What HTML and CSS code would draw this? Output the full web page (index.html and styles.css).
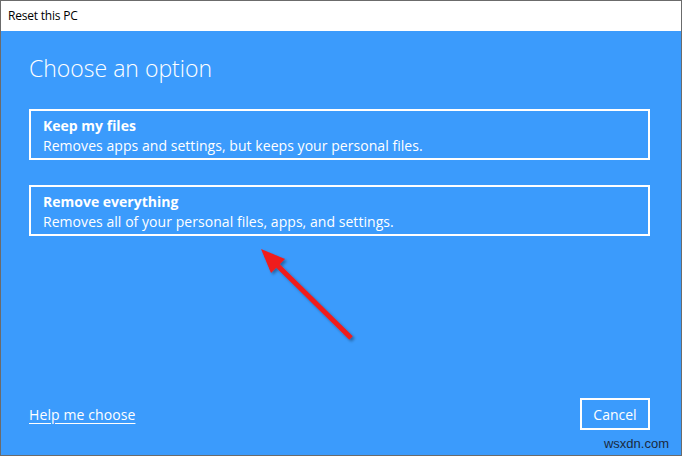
FILE: index.html
```html
<!DOCTYPE html>
<html lang="en">
<head>
    <meta charset="UTF-8">
    <title>Reset this PC</title>
    <link rel="stylesheet" href="styles.css">
</head>
<body>
    <div class="window">
        <div class="titlebar">Reset this PC</div>

        <div class="content">
            <h1 class="heading">Choose an option</h1>

            <div class="option">
                <div class="option-title">Keep my files</div>
                <div class="option-desc">Removes apps and settings, but keeps your personal files.</div>
            </div>

            <div class="option">
                <div class="option-title">Remove everything</div>
                <div class="option-desc">Removes all of your personal files, apps, and settings.</div>
            </div>

            <!-- Annotation arrow -->
            <svg class="arrow" width="120" height="110" viewBox="0 0 120 110">
                <defs>
                    <filter id="shadow" x="-20%" y="-20%" width="140%" height="140%">
                        <feDropShadow dx="2" dy="2" stdDeviation="1.5" flood-color="#000" flood-opacity="0.35"/>
                    </filter>
                </defs>
                <g filter="url(#shadow)">
                    <line x1="100" y1="96" x2="24" y2="21" stroke="#f01c1c" stroke-width="5"/>
                    <polygon points="10,7 34,17 20,31" fill="#f01c1c"/>
                </g>
            </svg>

            <div class="footer">
                <a class="help" href="#">Help me choose</a>
                <button class="cancel">Cancel</button>
            </div>
        </div>

        <div class="watermark">wsxdn.com</div>
    </div>
</body>
</html>
```

FILE: styles.css
```css
/* General Styles */
body {
    margin: 0;
    padding: 0;
    font-family: "Open Sans", "Noto Sans", sans-serif;
}

.window {
    position: relative;
    width: 682px;
    height: 456px;
    box-sizing: border-box;
    border: 1px solid #6b6b6b;
    display: flex;
    flex-direction: column;
    background: #3b9bfc;
    overflow: hidden;
}

.titlebar {
    height: 30px;
    background: #fff;
    color: #000;
    font-size: 12px;
    line-height: 30px;
    padding-left: 7px;
    letter-spacing: -0.2px;
}

.content {
    flex: 1;
    display: flex;
    flex-direction: column;
    padding: 0 31px 0 28px;
    color: #fff;
}

.heading {
    margin: 20px 0 0 0;
    font-size: 23px;
    font-weight: 300;
    line-height: 34px;
}

.option {
    margin-top: 24px;
    height: 51px;
    box-sizing: border-box;
    border: 2px solid #fff;
    padding: 5px 12px 0 12px;
}

.option + .option {
    margin-top: 25px;
}

.option-title {
    font-size: 14px;
    font-weight: 700;
    line-height: 20px;
}

.option-desc {
    font-size: 14px;
    line-height: 19px;
    letter-spacing: 0.05px;
}

.arrow {
    position: absolute;
    left: 250px;
    top: 241px;
}

.footer {
    margin-top: auto;
    margin-bottom: 25px;
    display: flex;
    justify-content: space-between;
    align-items: center;
}

.help {
    color: #fff;
    font-size: 14px;
    letter-spacing: 0.1px;
    text-decoration: underline;
    text-underline-offset: 3px;
}

.cancel {
    width: 70px;
    height: 32px;
    background: transparent;
    border: 2px solid #fff;
    color: #fff;
    font-family: inherit;
    font-size: 14px;
    padding: 0;
}

.watermark {
    position: absolute;
    right: 12px;
    bottom: 4px;
    font-family: "Liberation Sans", Arial, sans-serif;
    font-size: 13px;
    color: #1a2a40;
}
```
